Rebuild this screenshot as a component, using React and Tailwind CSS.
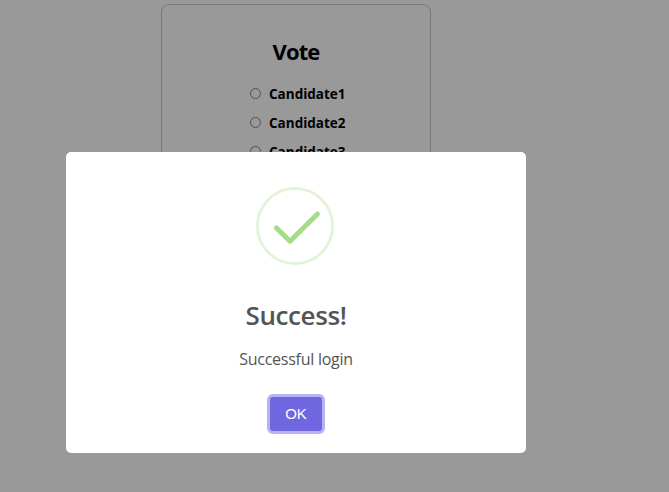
const candidates = ['Candidate1', 'Candidate2', 'Candidate3'];

function VoteCard() {
  return (
    <div className="ml-[161px] h-[240px] w-[270px] rounded-lg border border-[#797979] pt-[31px]">
      <h2 className="text-center text-[22px] font-bold leading-[30px] tracking-[-0.9px]">Vote</h2>
      <div className="mt-[13px] flex flex-col pl-[88px]">
        {candidates.map((name) => (
          <label key={name} className="flex h-[29px] items-center">
            <span className="h-[11px] w-[11px] rounded-full border border-[#4f4f4f]" />
            <span className="ml-2 whitespace-nowrap text-[13.5px] font-bold leading-5">{name}</span>
          </label>
        ))}
      </div>
    </div>
  );
}

function SuccessDialog() {
  return (
    <div
      role="dialog"
      className="absolute left-[66px] top-[152px] flex h-[301px] w-[460px] flex-col items-center rounded-[5px] bg-white pt-[35px] text-[#545454]"
    >
      <svg className="mr-[2px] h-[78px] w-[78px]" viewBox="0 0 78 78" fill="none">
        <circle cx="39" cy="39" r="37.6" stroke="#e2f3d8" strokeWidth="2.8" />
        <path d="M20.5 41 L34 54.2 L61.5 27" stroke="#a5dc86" strokeWidth="5" strokeLinecap="round" strokeLinejoin="round" />
      </svg>
      <h2 className="mt-[30px] text-[26px] font-semibold leading-[40px] tracking-[-0.4px]">Success!</h2>
      <p className="mt-[12px] text-[16px] leading-6 tracking-[-0.25px]">Successful login</p>
      <button className="mt-[26px] h-[34px] w-[52px] rounded-[3px] bg-[#7066e0] font-['Liberation_Sans',sans-serif] text-[15px] text-white ring-[3px] ring-[#b8b2f0]">
        OK
      </button>
    </div>
  );
}

export default function App() {
  return (
    <div className="relative h-[492px] w-[669px] overflow-hidden bg-[#999999] pt-1 font-['Open_Sans',sans-serif] text-black">
      <VoteCard />
      <SuccessDialog />
    </div>
  );
}
